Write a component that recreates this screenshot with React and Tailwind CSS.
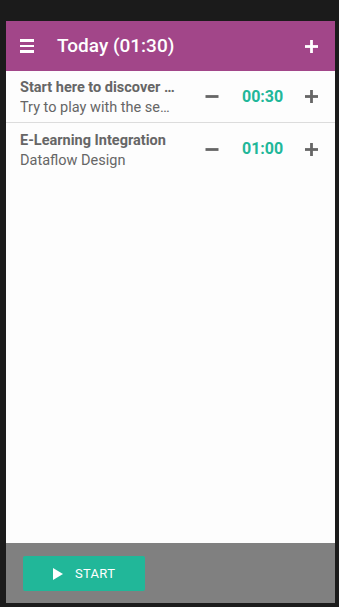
import React from 'react';

const items = [
    { title: 'Start here to discover Odoo Timesheets', sub: 'Try to play with the search bar', time: '00:30' },
    { title: 'E-Learning Integration', sub: 'Dataflow Design', time: '01:00' },
];

function Plus({ className }) {
    return (
        <svg viewBox="0 0 14 14" className={className} fill="currentColor">
            <rect x="5.5" y="0" width="3" height="14" />
            <rect x="0" y="5.5" width="14" height="3" />
        </svg>
    );
}

function Minus({ className }) {
    return (
        <svg viewBox="0 0 14 14" className={className} fill="currentColor">
            <rect x="0" y="5.5" width="14" height="3" />
        </svg>
    );
}

export default function App() {
    return (
        <div className="w-[339px] h-[607px] bg-[#1b1b1b] pt-[21px] pl-[6px] font-['Roboto',sans-serif]">
            <div className="w-[329px] h-[582px] bg-[#fdfdfd] flex flex-col">
                <div className="h-[50px] bg-[#a24689] flex items-center pl-[14px] pr-[17px] text-white shrink-0">
                    <div className="flex flex-col gap-[3px] w-[14px]">
                        <span className="h-[2.5px] bg-white block" />
                        <span className="h-[2.5px] bg-white block" />
                        <span className="h-[2.5px] bg-white block" />
                    </div>
                    <h1 className="ml-[23px] text-[19px] font-medium">Today (01:30)</h1>
                    <Plus className="ml-auto w-[13px] h-[13px]" />
                </div>

                <div className="flex-1">
                    {items.map((item, i) => (
                        <div
                            key={i}
                            className={`h-[52px] flex items-center pl-[14px] pr-[17px] ${i === 0 ? 'border-b border-[#dcdcdc]' : ''}`}
                        >
                            <div className="w-[156px] text-[#666] leading-[20px] pt-[3px]">
                                <div className="text-[14.5px] font-bold truncate">{item.title}</div>
                                <div className="text-[14.5px] truncate">{item.sub}</div>
                            </div>
                            <Minus className="ml-[29px] w-[14px] h-[13px] text-[#666]" />
                            <div className="ml-[23px] text-[16px] font-bold text-[#21b799]">{item.time}</div>
                            <Plus className="ml-auto w-[13px] h-[13px] text-[#666]" />
                        </div>
                    ))}
                </div>

                <div className="h-[60px] bg-[#808080] pl-[17px] pt-[13px] shrink-0">
                    <button className="w-[122px] h-[35px] bg-[#21b799] rounded-[2px] flex items-center pl-[30px] text-white text-[13px]">
                        <svg viewBox="0 0 10 12" className="w-[10px] h-[12px]" fill="currentColor">
                            <polygon points="0,0 10,6 0,12" />
                        </svg>
                        <span className="ml-[12px] tracking-[0.3px]">START</span>
                    </button>
                </div>
            </div>
        </div>
    );
}
